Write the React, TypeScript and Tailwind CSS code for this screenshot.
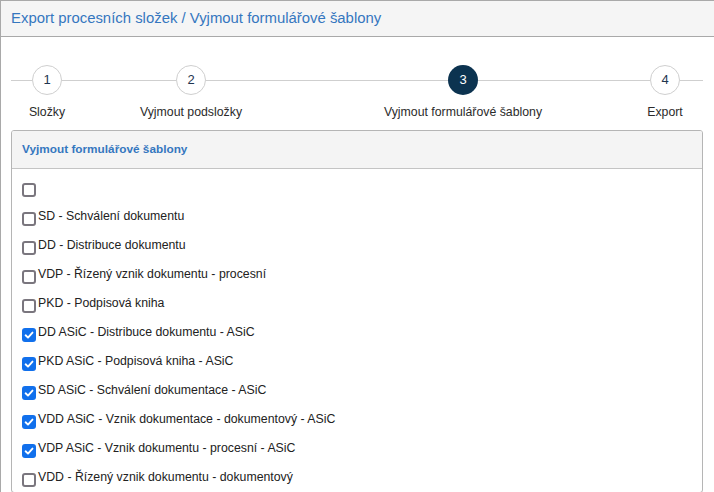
import React from "react";

const steps = [
  { n: 1, label: "Složky", w: "w-[72px]" },
  { n: 2, label: "Vyjmout podsložky", w: "w-[216px]" },
  { n: 3, label: "Vyjmout formulářové šablony", w: "w-[328px]", active: true },
  { n: 4, label: "Export", w: "w-[76px]" },
];

const templates = [
  { label: "", checked: false },
  { label: "SD - Schválení dokumentu", checked: false },
  { label: "DD - Distribuce dokumentu", checked: false },
  { label: "VDP - Řízený vznik dokumentu - procesní", checked: false },
  { label: "PKD - Podpisová kniha", checked: false },
  { label: "DD ASiC - Distribuce dokumentu - ASiC", checked: true },
  { label: "PKD ASiC - Podpisová kniha - ASiC", checked: true },
  { label: "SD ASiC - Schválení dokumentace - ASiC", checked: true },
  { label: "VDD ASiC - Vznik dokumentace - dokumentový - ASiC", checked: true },
  { label: "VDP ASiC - Vznik dokumentu - procesní - ASiC", checked: true },
  { label: "VDD - Řízený vznik dokumentu - dokumentový", checked: false },
];

const Stepper = () => {
  return (
    <div className="flex pt-[28px]">
      {steps.map((s) => (
        <div key={s.n} className={`${s.w} flex flex-col items-center`}>
          <div className="flex items-center w-full">
            <div className="flex-1 h-px bg-[#cfcfcf]" />
            <div
              className={
                s.active
                  ? "w-[30px] h-[30px] rounded-full bg-[#0c3350] text-white flex items-center justify-center text-[13px]"
                  : "w-[30px] h-[30px] rounded-full border border-[#cfcfcf] bg-white text-[#1f3550] flex items-center justify-center text-[13px]"
              }
            >
              {s.n}
            </div>
            <div className="flex-1 h-px bg-[#cfcfcf]" />
          </div>
          <span className="mt-[9px] text-[12.3px] leading-4 text-[#2b2b2b] whitespace-nowrap">
            {s.label}
          </span>
        </div>
      ))}
    </div>
  );
};

const Check = ({ checked }: { checked: boolean }) => {
  return checked ? (
    <span className="w-[14px] h-[14px] mt-[7px] mb-[2px] ml-[4px] mr-[2px] rounded-[3px] bg-[#1170ec] flex items-center justify-center shrink-0">
      <svg width="10" height="10" viewBox="0 0 10 10" fill="none">
        <path d="M1.6 5.3 L4 7.6 L8.5 2.6" stroke="white" strokeWidth="1.9" strokeLinecap="round" strokeLinejoin="round" />
      </svg>
    </span>
  ) : (
    <span className="w-[14px] h-[14px] mt-[7px] mb-[2px] ml-[4px] mr-[2px] rounded-[3px] border-2 border-[#7a767e] bg-white shrink-0" />
  );
};

export default function App() {
  return (
    <div
      className="h-[492px] overflow-hidden bg-white border-l border-t border-[#a9a9a9]"
      style={{ fontFamily: '"Liberation Sans", Arial, sans-serif' }}
    >
      <div className="h-[36px] bg-[#f5f5f5] border-b border-[#a9a9a9] flex items-center px-[10px]">
        <h1 className="text-[14.9px] text-[#3577bf]">
          Export procesních složek / Vyjmout formulářové šablony
        </h1>
      </div>
      <div className="pl-[10px] pr-[11px]">
        <Stepper />
        <div className="mt-[10px] border border-[#b5b5b5] rounded-[3px] overflow-hidden">
          <div className="h-[38px] bg-[#f4f4f4] border-b border-[#c4c4c4] flex items-center px-[10px]">
            <h2 className="text-[11.8px] font-bold text-[#3577bf]">Vyjmout formulářové šablony</h2>
          </div>
          <div className="pt-[4px] px-[6px] flex flex-col">
            {templates.map((t, i) => (
              <div key={i} className="flex items-center h-[29px] text-[12.3px] text-[#222]">
                <Check checked={t.checked} />
                <span>{t.label}</span>
              </div>
            ))}
          </div>
        </div>
      </div>
    </div>
  );
}
